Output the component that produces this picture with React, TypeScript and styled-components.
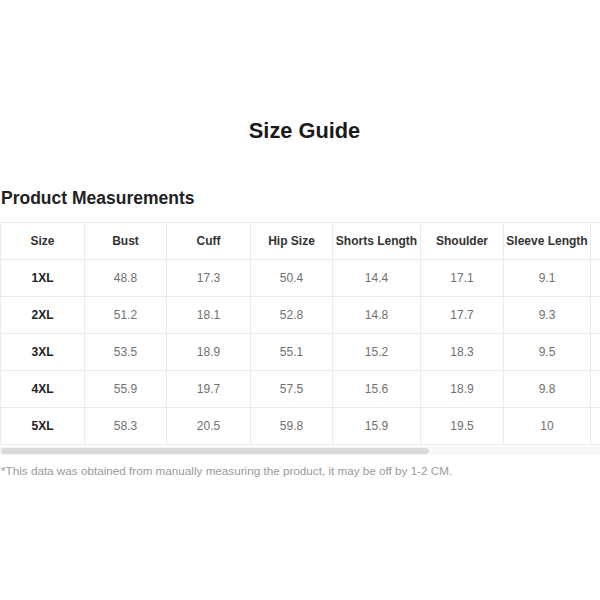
import React from "react";
import styled, { createGlobalStyle } from "styled-components";

const Global = createGlobalStyle`
  html, body { margin: 0; padding: 0; background: #fff; }
  body { font-family: "Liberation Sans", Arial, sans-serif; }
`;

const Page = styled.div`
  width: 600px;
  padding-top: 118px;
  display: flex;
  flex-direction: column;
`;

const Title = styled.h1`
  margin: 0;
  padding-left: 9px;
  text-align: center;
  font-size: 21.8px;
  line-height: 26px;
  font-weight: 700;
  color: #1a1a1a;
`;

const Heading = styled.h2`
  margin: 42px 0 12px 1px;
  font-size: 17.5px;
  line-height: 24px;
  font-weight: 700;
  color: #222;
`;

const Scroller = styled.div`
  width: 600px;
  overflow: hidden;
`;

const Table = styled.table`
  border-collapse: collapse;
  table-layout: fixed;
  width: 839px;
`;

const Cell = styled.td<{ $head?: boolean; $strong?: boolean }>`
  border: 1px solid #ebebeb;
  height: 36px;
  padding: 0;
  text-align: center;
  vertical-align: middle;
  font-size: 12px;
  white-space: nowrap;
  font-weight: ${(p) => (p.$head || p.$strong ? 700 : 400)};
  color: ${(p) => (p.$head ? "#333" : p.$strong ? "#222" : "#707070")};
`;

const Track = styled.div`
  width: 600px;
  height: 9px;
  margin-top: 1px;
  background: #f7f7f7;
  display: flex;
  align-items: center;
`;

const Thumb = styled.div`
  height: 6px;
  margin-left: 1px;
  border-radius: 3px;
  background: #dadada;
`;

const Note = styled.p`
  margin: 8px 0 0 1px;
  font-size: 11.7px;
  line-height: 16px;
  color: #9a9a9a;
`;

const widths = [84, 82, 84, 82, 88, 83, 87, 83, 83, 83];
const tableWidth = widths.reduce((a, b) => a + b, 0);
const headers = ["Size", "Bust", "Cuff", "Hip Size", "Shorts Length", "Shoulder", "Sleeve Length", "Thigh", "Waist Size", "Length"];
const rows = [
  ["1XL", "48.8", "17.3", "50.4", "14.4", "17.1", "9.1", "", "", ""],
  ["2XL", "51.2", "18.1", "52.8", "14.8", "17.7", "9.3", "", "", ""],
  ["3XL", "53.5", "18.9", "55.1", "15.2", "18.3", "9.5", "", "", ""],
  ["4XL", "55.9", "19.7", "57.5", "15.6", "18.9", "9.8", "", "", ""],
  ["5XL", "58.3", "20.5", "59.8", "15.9", "19.5", "10", "", "", ""],
];

export default function App() {
  const thumbWidth = Math.round((600 * 600) / tableWidth) - 1;
  return (
    <>
      <Global />
      <Page>
        <Title>Size Guide</Title>
        <Heading>Product Measurements</Heading>
        <Scroller>
          <Table>
            <colgroup>
              {widths.map((w, i) => (
                <col key={i} style={{ width: w }} />
              ))}
            </colgroup>
            <thead>
              <tr>
                {headers.map((h, i) => (
                  <Cell as="th" key={i} $head>
                    {i < 7 ? h : ""}
                  </Cell>
                ))}
              </tr>
            </thead>
            <tbody>
              {rows.map((r, ri) => (
                <tr key={ri}>
                  {r.map((v, ci) => (
                    <Cell key={ci} $strong={ci === 0}>
                      {v}
                    </Cell>
                  ))}
                </tr>
              ))}
            </tbody>
          </Table>
        </Scroller>
        <Track>
          <Thumb style={{ width: thumbWidth }} />
        </Track>
        <Note>*This data was obtained from manually measuring the product, it may be off by 1-2 CM.</Note>
      </Page>
    </>
  );
}
